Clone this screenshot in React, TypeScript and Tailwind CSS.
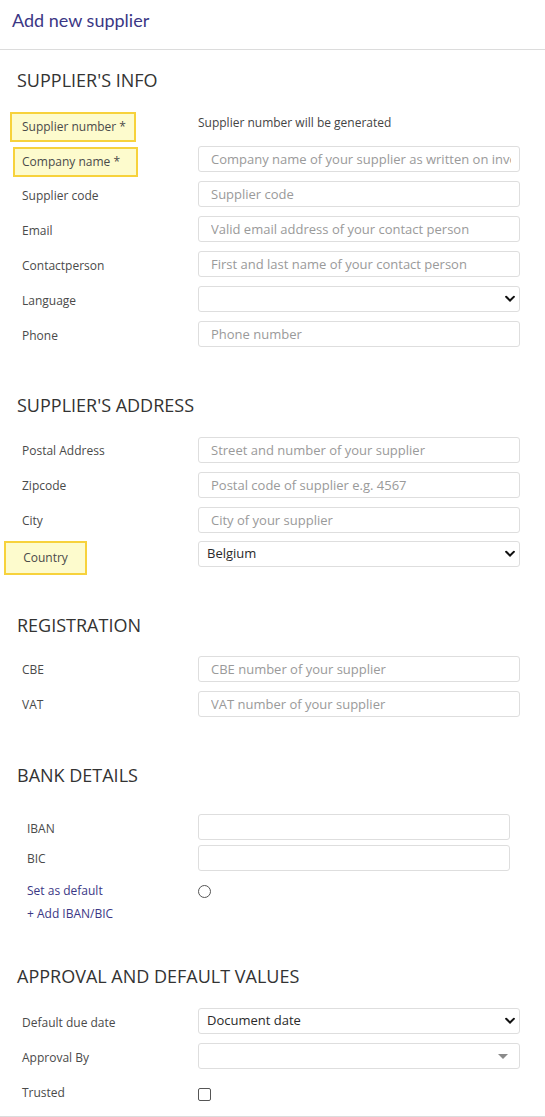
import React from "react";

const font = { fontFamily: '"Open Sans", "Liberation Sans", sans-serif' };

function Chevron() {
  return (
    <svg width="10" height="7" viewBox="0 0 10 7" className="absolute right-[4px] top-1/2 -translate-y-1/2">
      <path d="M1.2 1.3 L5 5 L8.8 1.3" fill="none" stroke="#111" strokeWidth="2" strokeLinecap="square" />
    </svg>
  );
}

function TextInput({ placeholder, w = "w-[322px]" }: { placeholder?: string; w?: string }) {
  return (
    <input
      readOnly
      placeholder={placeholder}
      className={`${w} h-[26px] border border-[#dedede] rounded-[3px] pl-[12px] pr-2 text-[13px] text-[#444] placeholder:text-[#9a9a9a] outline-none bg-white`}
      style={font}
    />
  );
}

function SelectBox({ value }: { value?: string }) {
  return (
    <div className="relative w-[322px] h-[26px] border border-[#dedede] rounded-[3px] bg-white flex items-center pl-[8px] text-[13px] text-[#2a2a2a]">
      {value}
      <Chevron />
    </div>
  );
}

function Row({ label, children, h = "h-[35px]" }: { label: React.ReactNode; children: React.ReactNode; h?: string }) {
  return (
    <div className={`flex items-center ${h}`}>
      <div className="w-[198px] shrink-0 flex items-center">{label}</div>
      <div className="flex items-center">{children}</div>
    </div>
  );
}

function Label({ children }: { children: React.ReactNode }) {
  return <span className="pl-[22px] mt-[3px] text-[12px] text-[#4a4a4a] whitespace-nowrap">{children}</span>;
}

function Heading({ children, mt }: { children: React.ReactNode; mt: string }) {
  return <div className={`${mt} pl-[17px] h-[24px] leading-[24px] text-[18px] text-[#333]`}>{children}</div>;
}

export default function App() {
  return (
    <div className="w-[545px] h-[1117px] bg-white overflow-hidden" style={font}>
      <div
        className="h-[50px] border-b border-[#dcdcdc] pl-[12px] pt-[8px] text-[18px] leading-[24px] text-[#3b3785]"
        style={{ fontFamily: 'Lato, "Open Sans", sans-serif' }}
      >
        Add new supplier
      </div>

      <Heading mt="mt-[18px]">SUPPLIER'S INFO</Heading>
      <div className="mt-[17px]">
        <Row
          h="h-[33px]"
          label={
            <span className="ml-[10px] w-[126px] h-[30px] border-2 border-[#f7d23c] bg-[#fdfbcd] pl-[10px] flex items-center whitespace-nowrap text-[12px] text-[#4a4a4a] mt-[2px]">
              Supplier number *
            </span>
          }
        >
          <span className="text-[12px] text-[#444] -mt-[5px]">Supplier number will be generated</span>
        </Row>
        <Row
          label={
            <span className="ml-[13px] w-[125px] h-[30px] border-2 border-[#f7d23c] bg-[#fdfbcd] pl-[7px] flex items-center whitespace-nowrap text-[12px] text-[#4a4a4a] mt-[4px]">
              Company name *
            </span>
          }
        >
          <div className="-mt-[2px]">
            <TextInput placeholder="Company name of your supplier as written on invoices" />
          </div>
        </Row>
        <Row label={<Label>Supplier code</Label>}>
          <div className="-mt-[1px]">
            <TextInput placeholder="Supplier code" />
          </div>
        </Row>
        <Row label={<Label>Email</Label>}>
          <div className="-mt-[1px]">
            <TextInput placeholder="Valid email address of your contact person" />
          </div>
        </Row>
        <Row label={<Label>Contactperson</Label>}>
          <div className="-mt-[1px]">
            <TextInput placeholder="First and last name of your contact person" />
          </div>
        </Row>
        <Row label={<Label>Language</Label>}>
          <div className="-mt-[1px]">
            <SelectBox />
          </div>
        </Row>
        <Row label={<Label>Phone</Label>}>
          <div className="-mt-[1px]">
            <TextInput placeholder="Phone number" />
          </div>
        </Row>
      </div>

      <Heading mt="mt-[41px]">SUPPLIER'S ADDRESS</Heading>
      <div className="mt-[15px]">
        <Row label={<Label>Postal Address</Label>}>
          <TextInput placeholder="Street and number of your supplier" />
        </Row>
        <Row label={<Label>Zipcode</Label>}>
          <TextInput placeholder="Postal code of supplier e.g. 4567" />
        </Row>
        <Row label={<Label>City</Label>}>
          <TextInput placeholder="City of your supplier" />
        </Row>
        <Row
          label={
            <span className="ml-[4px] w-[83px] h-[34px] border-2 border-[#f7d23c] bg-[#fdfbcd] flex items-center justify-center text-[12px] text-[#4a4a4a] mt-[6px]">
              Country
            </span>
          }
        >
          <div className="-mt-[2px]">
            <SelectBox value="Belgium" />
          </div>
        </Row>
      </div>

      <Heading mt="mt-[41px]">REGISTRATION</Heading>
      <div className="mt-[14px]">
        <Row label={<Label>CBE</Label>}>
          <TextInput placeholder="CBE number of your supplier" />
        </Row>
        <Row label={<Label>VAT</Label>}>
          <TextInput placeholder="VAT number of your supplier" />
        </Row>
      </div>

      <Heading mt="mt-[42px]">BANK DETAILS</Heading>
      <div className="mt-[24px]">
        <Row h="h-[31px]" label={<span className="pl-[27px] text-[12px] text-[#4a4a4a] mt-[4px]">IBAN</span>}>
          <TextInput w="w-[312px]" />
        </Row>
        <Row h="h-[31px]" label={<span className="pl-[27px] text-[12px] text-[#4a4a4a] mt-[2px]">BIC</span>}>
          <TextInput w="w-[312px]" />
        </Row>
        <div className="mt-[2px] h-[30px] flex items-center">
          <div className="w-[198px] pl-[27px] text-[12px] text-[#3b3785] mt-[1px]">Set as default</div>
          <div className="w-[13px] h-[13px] rounded-full border border-[#555] mt-[3px]" />
        </div>
        <div className="h-[16px] flex items-center pl-[27px] text-[12px] text-[#3b3785] mt-[1px]">+ Add IBAN/BIC</div>
      </div>

      <Heading mt="mt-[42px]">APPROVAL AND DEFAULT VALUES</Heading>
      <div className="mt-[16px]">
        <Row label={<Label>Default due date</Label>}>
          <div className="-mt-[2px]">
            <SelectBox value="Document date" />
          </div>
        </Row>
        <Row label={<Label>Approval By</Label>}>
          <div className="relative w-[322px] h-[26px] border border-[#dedede] rounded-[3px] bg-white -mt-[2px]">
            <svg width="10" height="6" viewBox="0 0 10 6" className="absolute right-[11px] top-[10px]">
              <path d="M0 0 L10 0 L5 5 Z" fill="#8a8a8a" />
            </svg>
          </div>
        </Row>
        <Row label={<Label>Trusted</Label>}>
          <div className="w-[13px] h-[13px] rounded-[2px] border border-[#555] bg-white mt-[5px]" />
        </Row>
      </div>
      <div className="mt-[7px] border-t border-[#dcdcdc]" />
    </div>
  );
}
